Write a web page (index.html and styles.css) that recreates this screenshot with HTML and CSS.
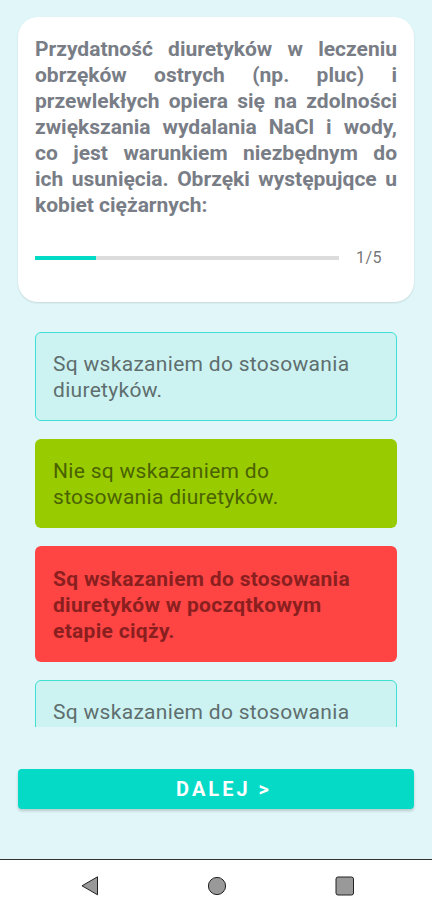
FILE: index.html
```html
<!DOCTYPE html>
<html lang="pl">
<head>
<meta charset="utf-8">
<link rel="stylesheet" href="styles.css">
</head>
<body>
<div class="screen">
  <div class="card">
    <p class="question"><span class="line">Przydatność diuretyków w leczeniu</span><span class="line">obrzęków ostrych (np. pluc) i</span><span class="line">przewlekłych opiera się na zdolności</span><span class="line">zwiększania wydalania NaCl i wody,</span><span class="line">co jest warunkiem niezbędnym do</span><span class="line">ich usunięcia. Obrzęki występujqce u</span><span class="line last">kobiet ciężarnych:</span></p>
    <div class="progress-row">
      <div class="track"><div class="fill" style="width:20%"></div></div>
      <span class="count">1/5</span>
    </div>
  </div>
  <div class="options">
    <div class="option neutral">Sq wskazaniem do stosowania diuretyków.</div>
    <div class="option correct">Nie sq wskazaniem do stosowania diuretyków.</div>
    <div class="option wrong">Sq wskazaniem do stosowania diuretyków w poczqtkowym etapie ciqży.</div>
    <div class="option neutral">Sq wskazaniem do stosowania diuretyków w drugim trymestrze ciqży.</div>
  </div>
  <button class="next">DALEJ &gt;</button>
</div>
<nav class="navbar">
  <svg class="nav-icon" width="18" height="20" viewBox="0 0 18 20"><path d="M16.5 0.8 L1 9.8 L16.5 18.8 Z" fill="#999" stroke="#222" stroke-width="1" stroke-linejoin="round"/></svg>
  <svg class="nav-icon" width="20" height="20" viewBox="0 0 20 20"><circle cx="10" cy="10" r="8.6" fill="#999" stroke="#222" stroke-width="1"/></svg>
  <svg class="nav-icon" width="20" height="20" viewBox="0 0 20 20"><rect x="1" y="1" width="17.5" height="18" rx="2" fill="#999" stroke="#222" stroke-width="1"/></svg>
</nav>
</body>
</html>
```
FILE: styles.css
```css
html, body {
  margin: 0;
  padding: 0;
}
body {
  width: 432px;
  height: 912px;
  font-family: Roboto, "Noto Sans", sans-serif;
  display: flex;
  flex-direction: column;
  background: #e0f6f8;
  overflow: hidden;
}
.screen {
  height: 859px;
  background: #e0f6f8;
  display: flex;
  flex-direction: column;
  padding-top: 17px;
  box-sizing: border-box;
}
.card {
  margin: 0 18px;
  background: #fff;
  border-radius: 20px;
  box-shadow: 0 1px 2px rgba(0,0,0,0.12);
  padding: 19px 17px 0 17px;
  height: 285px;
  box-sizing: border-box;
}
.question {
  margin: 0;
  font-size: 21px;
  line-height: 26px;
  font-weight: 700;
  color: #787d86;
}
.line {
  display: block;
  white-space: nowrap;
  text-align: justify;
  text-align-last: justify;
}
.line.last {
  text-align-last: left;
}
.progress-row {
  display: flex;
  align-items: center;
  margin-top: 30px;
}
.track {
  width: 304px;
  height: 4px;
  background: #dcdcdc;
}
.fill {
  height: 100%;
  background: #03dac5;
}
.count {
  margin-left: 17px;
  font-size: 16px;
  color: #777;
  letter-spacing: 0.5px;
}
.options {
  margin: 30px 35px 0 35px;
  height: 395px;
  overflow: hidden;
  display: flex;
  flex-direction: column;
  gap: 18px;
}
.option {
  flex: none;
  border-radius: 6px;
  padding: 19px 18px 18px 18px;
  font-size: 21px;
  line-height: 26px;
  letter-spacing: 0.3px;
  box-sizing: border-box;
}
.neutral {
  background: #ccf3f2;
  border: 1.5px solid #3fdfd2;
  color: #5f6e6e;
  padding: 18px 17px 17px 17px;
}
.correct {
  background: #99cc00;
  color: #4a6300;
}
.wrong {
  background: #ff4444;
  color: #8a1f1f;
  font-weight: 700;
  padding: 20px 18px 18px 18px;
}
.next {
  margin: 42px 18px 0 18px;
  height: 40px;
  border: none;
  border-radius: 4px;
  background: #04dac6;
  color: #fff;
  font-family: Roboto, sans-serif;
  font-weight: 700;
  font-size: 20px;
  letter-spacing: 3px;
  box-shadow: 0 2px 3px rgba(0,0,0,0.18);
  padding: 0 0 0 16px;
}
.navbar {
  height: 53px;
  background: #fff;
  border-top: 1px solid #333;
  box-sizing: border-box;
  display: flex;
  align-items: center;
  padding-left: 81px;
  gap: 108px;
}
```
